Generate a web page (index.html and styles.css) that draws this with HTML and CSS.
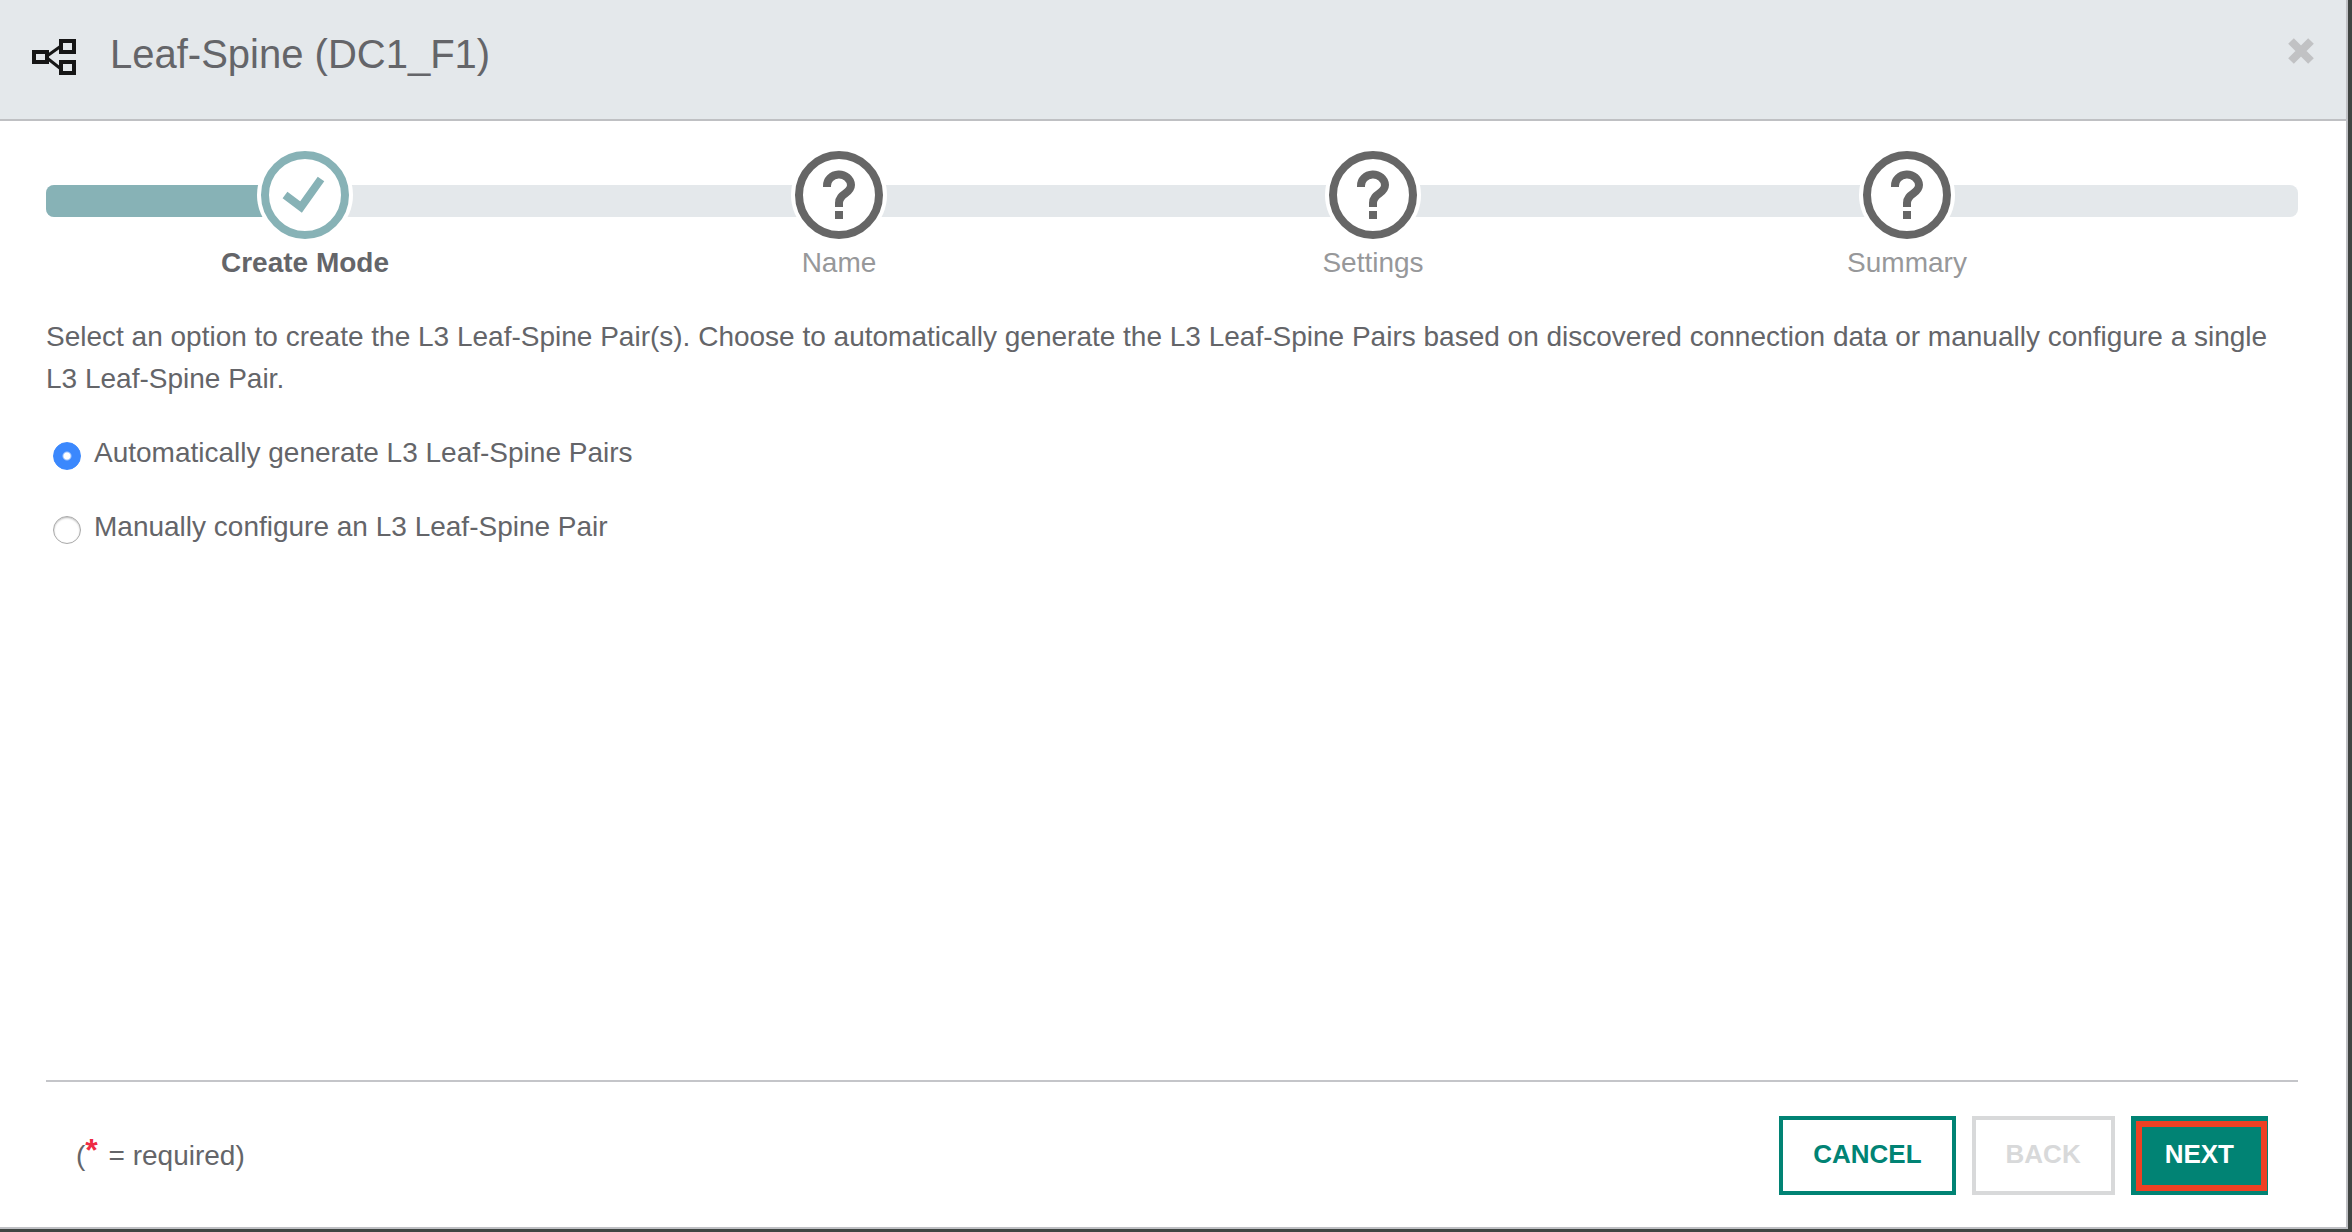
FILE: index.html
```html
<!DOCTYPE html>
<html lang="en">
<head>
<meta charset="utf-8">
<title>Leaf-Spine (DC1_F1)</title>
<link rel="stylesheet" href="styles.css">
</head>
<body>
<main class="dialog">
  <header class="dialog-header">
    <svg class="topology-icon" viewBox="0 0 46 44" width="46" height="44" aria-hidden="true">
      <g fill="none" stroke="#161616" stroke-width="4">
        <path d="M16 24L30 14M16 26L30 37" stroke-width="3"/>
        <rect x="3" y="20" width="13" height="10"/>
        <rect x="30" y="9" width="13" height="11"/>
        <rect x="30" y="30" width="13" height="11"/>
      </g>
    </svg>
    <h1 class="dialog-title">Leaf-Spine (DC1_F1)</h1>
    <button class="close" type="button" aria-label="Close">
      <svg viewBox="0 0 26 26" width="26" height="26"><path d="M3 3L23 23M23 3L3 23" stroke="#c1c2c4" stroke-width="8"/></svg>
    </button>
  </header>
  <form class="wizard">
    <div class="progress">
      <div class="track"><div class="track-fill"></div></div>
      <ol class="steps">
        <li class="step step-current">
          <svg class="step-icon" viewBox="0 0 96 96" width="96" height="96" aria-hidden="true">
            <circle cx="48" cy="48" r="48" fill="#fff"/>
            <circle cx="48" cy="48" r="40" fill="none" stroke="#87b2b6" stroke-width="8"/>
            <path d="M28 48L44 60L64 32" fill="none" stroke="#87b2b6" stroke-width="8"/>
          </svg>
          <span class="step-label">Create Mode</span>
        </li>
        <li class="step">
          <svg class="step-icon" viewBox="0 0 96 96" width="96" height="96" aria-hidden="true">
            <circle cx="48" cy="48" r="48" fill="#fff"/>
            <circle cx="48" cy="48" r="40" fill="none" stroke="#666" stroke-width="8"/>
            <path d="M36 40V39A12 11 0 0 1 60 38C60 47 48 46 48 56V60M48 64V72" fill="none" stroke="#666" stroke-width="8"/>
          </svg>
          <span class="step-label">Name</span>
        </li>
        <li class="step">
          <svg class="step-icon" viewBox="0 0 96 96" width="96" height="96" aria-hidden="true">
            <circle cx="48" cy="48" r="48" fill="#fff"/>
            <circle cx="48" cy="48" r="40" fill="none" stroke="#666" stroke-width="8"/>
            <path d="M36 40V39A12 11 0 0 1 60 38C60 47 48 46 48 56V60M48 64V72" fill="none" stroke="#666" stroke-width="8"/>
          </svg>
          <span class="step-label">Settings</span>
        </li>
        <li class="step">
          <svg class="step-icon" viewBox="0 0 96 96" width="96" height="96" aria-hidden="true">
            <circle cx="48" cy="48" r="48" fill="#fff"/>
            <circle cx="48" cy="48" r="40" fill="none" stroke="#666" stroke-width="8"/>
            <path d="M36 40V39A12 11 0 0 1 60 38C60 47 48 46 48 56V60M48 64V72" fill="none" stroke="#666" stroke-width="8"/>
          </svg>
          <span class="step-label">Summary</span>
        </li>
      </ol>
    </div>
    <p class="description">Select an option to create the L3 Leaf-Spine Pair(s). Choose to automatically generate the L3 Leaf-Spine Pairs based on discovered connection data or manually configure a single L3 Leaf-Spine Pair.</p>
    <div class="options">
      <div class="option">
        <input class="radio" type="radio" name="mode" id="mode-auto" checked>
        <label for="mode-auto">Automatically generate L3 Leaf-Spine Pairs</label>
      </div>
      <div class="option">
        <input class="radio" type="radio" name="mode" id="mode-manual">
        <label for="mode-manual">Manually configure an L3 Leaf-Spine Pair</label>
      </div>
    </div>
    <footer class="dialog-footer">
      <p class="required-note">(<span class="asterisk">*</span> = required)</p>
      <div class="actions">
        <button class="button button-cancel" type="button">CANCEL</button>
        <button class="button button-back" type="button" disabled>BACK</button>
        <button class="button button-next" type="submit">NEXT</button>
      </div>
    </footer>
  </form>
</main>
</body>
</html>
```
FILE: styles.css
```css
* { box-sizing: border-box; }

body {
  margin: 0;
  min-height: 100vh;
  display: flex;
  padding: 0 4px 3px 0;
  background: #404442;
  color: #646569;
  font: 28px/42px "Liberation Sans", Arial, sans-serif;
}

.dialog {
  flex: 1;
  display: flex;
  flex-direction: column;
  background: #fff;
  border: solid #bfc0c4;
  border-width: 0 2px 2px 0;
}

.dialog-header {
  display: flex;
  align-items: center;
  padding: 30px 32px 41px 31px;
  background: #e4e8eb;
  border-bottom: 2px solid #bfc0c3;
}

.dialog-title {
  flex: 1;
  margin: 0 0 0 33px;
  font-size: 40px;
  line-height: 48px;
  font-weight: 400;
}

.close {
  display: flex;
  padding: 0;
  margin-bottom: 6px;
  border: 0;
  background: none;
}

.wizard {
  flex: 1;
  display: flex;
  flex-direction: column;
  padding: 26px 48px 32px 46px;
}

.progress { display: grid; }

.track, .steps { grid-area: 1 / 1; }

.track {
  height: 32px;
  margin-top: 38px;
  border-radius: 8px;
  background: #e4e8eb;
  overflow: hidden;
}

.track-fill {
  width: 11%;
  height: 100%;
  background: #87b2b6;
}

.steps {
  display: grid;
  grid-template-columns: repeat(4, 1fr);
  margin: 0 124px 0 -8px;
  padding: 0;
  list-style: none;
}

.step {
  display: flex;
  flex-direction: column;
  align-items: center;
  color: #97989a;
}

.step-label { line-height: 40px; }

.step-current { color: #646569; font-weight: 700; }

.description { margin: 33px 0 32px; }

.options {
  display: flex;
  flex-direction: column;
  gap: 32px;
  padding-left: 7px;
}

.option {
  display: flex;
  align-items: center;
  gap: 13px;
}

.radio {
  appearance: none;
  width: 28px;
  height: 28px;
  margin: 6px 0 0;
  border: 1px solid #aaa;
  border-radius: 50%;
  background: #fff;
  box-shadow: inset 0 1px 2px #bbb;
}

.radio:checked {
  border-color: #3b88fd;
  background: radial-gradient(circle, #fff 3px, #3b88fd 5px);
  box-shadow: none;
}

.dialog-footer {
  display: flex;
  justify-content: space-between;
  align-items: center;
  margin-top: auto;
  padding: 34px 30px 0;
  border-top: 2px solid #c4c5c9;
}

.required-note { margin: 0; }

.asterisk {
  margin-right: 3px;
  color: #ee2a43;
  font-size: 32px;
  font-weight: 700;
  line-height: 1;
  vertical-align: 4px;
}

.actions { display: flex; gap: 16px; }

.button {
  height: 79px;
  padding: 0 30px 4px;
  border: 4px solid #018374;
  background: #fff;
  color: #018374;
  font: 700 26px/32px "Liberation Sans", Arial, sans-serif;
}

.button-back { border-color: #d8d9da; color: #d8d9da; }

.button-next {
  position: relative;
  background: #018374;
  color: #fff;
}

/* Highlight frame drawn over the primary action */
.button-next::after {
  content: "";
  position: absolute;
  inset: 1px -3px 0 1px;
  border: 6px solid #ee4023;
}
```
